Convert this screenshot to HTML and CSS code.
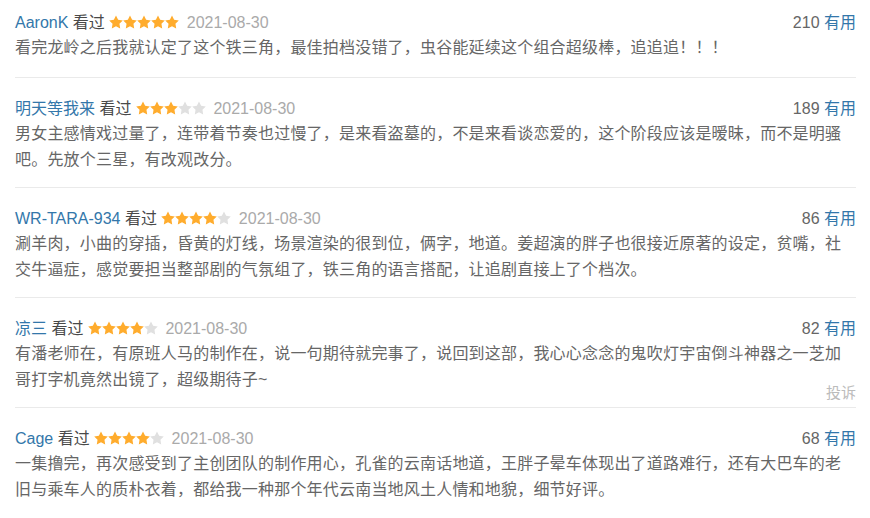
FILE: index.html
```html
<!DOCTYPE html>
<html lang="zh-CN">
<head>
    <meta charset="UTF-8">
    <title>短评</title>
    <link rel="stylesheet" href="styles.css">
</head>
<body>

    <svg class="defs" width="0" height="0">
        <symbol id="star" viewBox="1.2 1.2 21.6 20.6">
            <polygon points="12,1.5 15.29,7.97 22.46,9.1 17.33,14.23 18.47,21.4 12,18.1 5.53,21.4 6.67,14.23 1.54,9.1 8.71,7.97"/>
        </symbol>
    </svg>

    <div class="comment-list">

        <div class="comment-item">
            <div class="comment-info">
                <span class="meta">
                    <a class="user" href="#">AaronK</a> 看过
                    <span class="rating">
                        <svg class="star on"><use href="#star"/></svg><svg class="star on"><use href="#star"/></svg><svg class="star on"><use href="#star"/></svg><svg class="star on"><use href="#star"/></svg><svg class="star on"><use href="#star"/></svg>
                    </span>
                    <span class="time">2021-08-30</span>
                </span>
                <span class="votes"><span class="count">210</span> <a href="#">有用</a></span>
            </div>
            <p class="short">看完龙岭之后我就认定了这个铁三角，最佳拍档没错了，虫谷能延续这个组合超级棒，追追追！！！</p>
        </div>

        <div class="comment-item">
            <div class="comment-info">
                <span class="meta">
                    <a class="user" href="#">明天等我来</a> 看过
                    <span class="rating">
                        <svg class="star on"><use href="#star"/></svg><svg class="star on"><use href="#star"/></svg><svg class="star on"><use href="#star"/></svg><svg class="star"><use href="#star"/></svg><svg class="star"><use href="#star"/></svg>
                    </span>
                    <span class="time">2021-08-30</span>
                </span>
                <span class="votes"><span class="count">189</span> <a href="#">有用</a></span>
            </div>
            <p class="short">男女主感情戏过量了，连带着节奏也过慢了，是来看盗墓的，不是来看谈恋爱的，这个阶段应该是暧昧，而不是明骚吧。先放个三星，有改观改分。</p>
        </div>

        <div class="comment-item">
            <div class="comment-info">
                <span class="meta">
                    <a class="user" href="#">WR-TARA-934</a> 看过
                    <span class="rating">
                        <svg class="star on"><use href="#star"/></svg><svg class="star on"><use href="#star"/></svg><svg class="star on"><use href="#star"/></svg><svg class="star on"><use href="#star"/></svg><svg class="star"><use href="#star"/></svg>
                    </span>
                    <span class="time">2021-08-30</span>
                </span>
                <span class="votes"><span class="count">86</span> <a href="#">有用</a></span>
            </div>
            <p class="short">涮羊肉，小曲的穿插，昏黄的灯线，场景渲染的很到位，俩字，地道。姜超演的胖子也很接近原著的设定，贫嘴，社交牛逼症，感觉要担当整部剧的气氛组了，铁三角的语言搭配，让追剧直接上了个档次。</p>
        </div>

        <div class="comment-item">
            <div class="comment-info">
                <span class="meta">
                    <a class="user" href="#">凉三</a> 看过
                    <span class="rating">
                        <svg class="star on"><use href="#star"/></svg><svg class="star on"><use href="#star"/></svg><svg class="star on"><use href="#star"/></svg><svg class="star on"><use href="#star"/></svg><svg class="star"><use href="#star"/></svg>
                    </span>
                    <span class="time">2021-08-30</span>
                </span>
                <span class="votes"><span class="count">82</span> <a href="#">有用</a></span>
            </div>
            <p class="short">有潘老师在，有原班人马的制作在，说一句期待就完事了，说回到这部，我心心念念的鬼吹灯宇宙倒斗神器之一芝加哥打字机竟然出镜了，超级期待子~</p>
            <a class="report" href="#">投诉</a>
        </div>

        <div class="comment-item">
            <div class="comment-info">
                <span class="meta">
                    <a class="user" href="#">Cage</a> 看过
                    <span class="rating">
                        <svg class="star on"><use href="#star"/></svg><svg class="star on"><use href="#star"/></svg><svg class="star on"><use href="#star"/></svg><svg class="star on"><use href="#star"/></svg><svg class="star"><use href="#star"/></svg>
                    </span>
                    <span class="time">2021-08-30</span>
                </span>
                <span class="votes"><span class="count">68</span> <a href="#">有用</a></span>
            </div>
            <p class="short">一集撸完，再次感受到了主创团队的制作用心，孔雀的云南话地道，王胖子晕车体现出了道路难行，还有大巴车的老旧与乘车人的质朴衣着，都给我一种那个年代云南当地风土人情和地貌，细节好评。</p>
        </div>

    </div>

</body>
</html>
```

FILE: styles.css
```css
body {
    margin: 0;
    background: #fff;
    font-family: "Liberation Sans", "Noto Sans CJK SC", sans-serif;
    font-size: 16px;
    color: #494949;
}
a {
    color: #37a;
    text-decoration: none;
}
.defs {
    position: absolute;
    width: 0;
    height: 0;
}
.comment-list {
    padding: 0 14px 0 15px;
}
.comment-item {
    position: relative;
    padding: 19px 0 14px;
    border-bottom: 1px solid #eaeaea;
}
.comment-item:first-child {
    padding: 11px 0 16px;
}
.comment-item:last-child {
    border-bottom: none;
}
.comment-info {
    display: flex;
    justify-content: space-between;
    line-height: 24px;
    white-space: nowrap;
}
.rating {
    display: inline-flex;
    margin: 0 3px 0 0;
    vertical-align: -1px;
}
.star {
    width: 14px;
    height: 14px;
    fill: #e0e0e0;
}
.star.on {
    fill: #ffac2d;
}
.time {
    color: #aaa;
}
.votes .count {
    color: #666;
}
.short {
    margin: 0;
    line-height: 26px;
    letter-spacing: 0.2px;
    color: #666;
}
.report {
    position: absolute;
    right: 0;
    bottom: 5px;
    font-size: 15px;
    line-height: 18px;
    color: #bbb;
}
```
